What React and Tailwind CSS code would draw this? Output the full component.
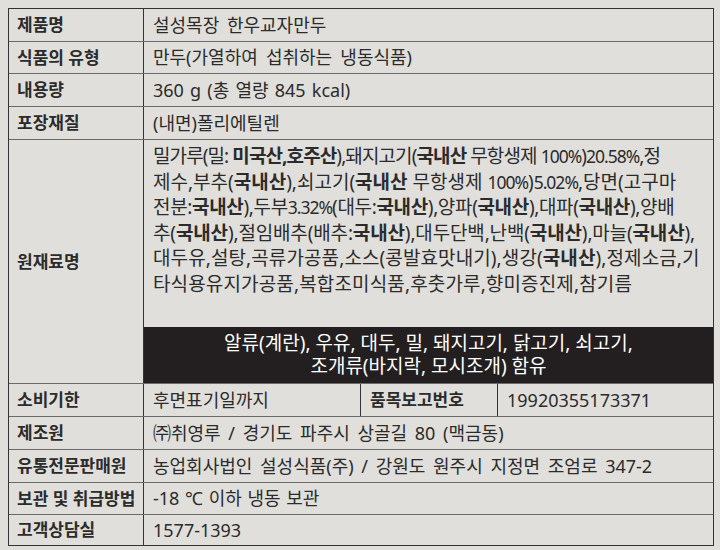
import React from "react";

const font = { fontFamily: '"Noto Sans", "Noto Sans CJK KR", sans-serif' };

const Row = ({ label, children, className = "", ws = "[word-spacing:3px]" }) => (
    <div className={`flex border-t border-[#6a6a6a] first:border-t-0 ${className}`}>
        <div className="w-[135px] shrink-0 border-r border-[#333] pl-2 flex items-center text-[17px] font-bold">
            {label}
        </div>
        <div className={`flex-1 flex items-center pl-[9px] text-[18px] ${ws}`}>{children}</div>
    </div>
);

const B = ({ children }) => <span className="font-bold">{children}</span>;
// numbers in the ingredients list are set tighter than the hangul
const N = ({ children }) => <span className="text-[17.5px] tracking-[-1px]">{children}</span>;

const App = () => {
    return (
        <div className="w-[720px] h-[550px] bg-[#e1dfdb] text-[#2b2b2b] pt-2 pl-2" style={font}>
            <div className="w-[706px] border border-[#333] flex flex-col">
                <Row label="제품명" className="h-[32px]">설성목장 한우교자만두</Row>
                <Row label="식품의 유형" className="h-[32px]" ws="[word-spacing:3.5px]">만두(가열하여 섭취하는 냉동식품)</Row>
                <Row label="내용량" className="h-[33px]" ws="[word-spacing:1.5px]">360 g (총 열량 845 kcal)</Row>
                <Row label="포장재질" className="h-[33px]">(내면)폴리에틸렌</Row>

                {/* 원재료명 */}
                <div className="flex border-t border-[#6a6a6a] h-[244px]">
                    <div className="w-[135px] shrink-0 border-r border-[#333] pl-2 flex items-center text-[17px] font-bold">
                        원재료명
                    </div>
                    <div className="flex-1 flex flex-col">
                        <div className="pl-[9px] pt-[4px] text-[19px] leading-[25.6px] whitespace-nowrap">
                            <div className="tracking-[-0.9px]">밀가루(밀: <B>미국산,호주산</B>),돼지고기(<B>국내산</B> 무항생제 <N>100%</N>)<N>20.58%</N>,정</div>
                            <div>제수,부추(<B>국내산</B>),쇠고기(<B>국내산</B> 무항생제 <N>100%</N>)<N>5.02%</N>,당면(고구마</div>
                            <div className="tracking-[-0.35px]">전분:<B>국내산</B>),두부<N>3.32%</N>(대두:<B>국내산</B>),양파(<B>국내산</B>),대파(<B>국내산</B>),양배</div>
                            <div className="tracking-[-0.15px]">추(<B>국내산</B>),절임배추(배추:<B>국내산</B>),대두단백,난백(<B>국내산</B>),마늘(<B>국내산</B>),</div>
                            <div className="tracking-[0.1px]">대두유,설탕,곡류가공품,소스(콩발효맛내기),생강(<B>국내산</B>),정제소금,기</div>
                            <div className="tracking-[0.14px]">타식용유지가공품,복합조미식품,후춧가루,향미증진제,참기름</div>
                        </div>
                        <div className="mt-auto h-[56px] bg-[#231f20] text-white flex flex-col items-center justify-center text-[19px] leading-[23px]">
                            <div>알류(계란), 우유, 대두, 밀, 돼지고기, 닭고기, 쇠고기,</div>
                            <div>조개류(바지락, 모시조개) 함유</div>
                        </div>
                    </div>
                </div>

                {/* 소비기한 / 품목보고번호 */}
                <div className="flex border-t border-[#6a6a6a] h-[33px]">
                    <div className="w-[135px] shrink-0 border-r border-[#333] pl-2 flex items-center text-[17px] font-bold">
                        소비기한
                    </div>
                    <div className="w-[217px] shrink-0 border-r border-[#333] pl-[9px] flex items-center text-[18px]">
                        후면표기일까지
                    </div>
                    <div className="w-[137px] shrink-0 border-r border-[#333] pl-[9px] flex items-center text-[17px] font-bold">
                        품목보고번호
                    </div>
                    <div className="flex-1 pl-[9px] flex items-center text-[18px]">19920355173371</div>
                </div>

                <Row label="제조원" className="h-[33px]">㈜취영루 / 경기도 파주시 상골길 80 (맥금동)</Row>
                <Row label="유통전문판매원" className="h-[33px]">농업회사법인 설성식품(주) / 강원도 원주시 지정면 조엄로 347-2</Row>
                <Row label="보관 및 취급방법" className="h-[32px]" ws="[word-spacing:1px]">-18 ℃ 이하 냉동 보관</Row>
                <Row label="고객상담실" className="h-[31px]">1577-1393</Row>
            </div>
        </div>
    );
};

export default App;
